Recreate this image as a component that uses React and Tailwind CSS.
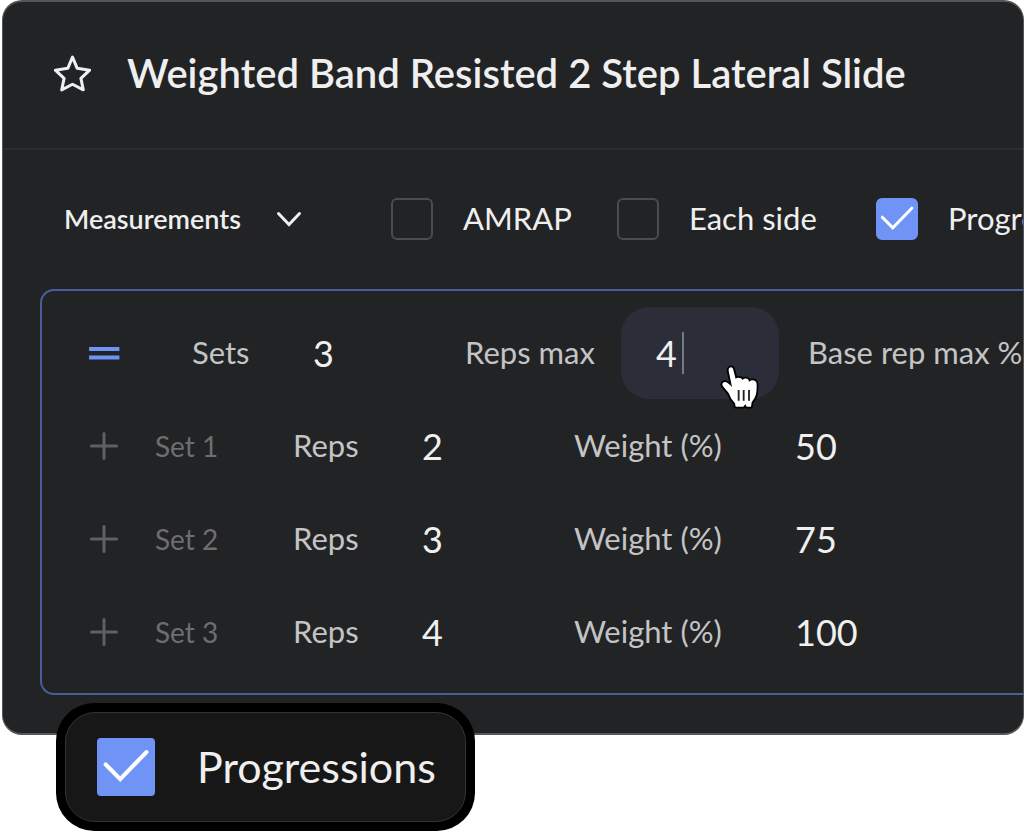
import React, { useState } from "react";

function StarIcon() {
  return (
    <svg className="h-[37px] w-[37px]" viewBox="161 166 110 108" fill="none" stroke="#efefef" strokeWidth="9" strokeLinejoin="round" aria-hidden="true">
      <path d="M216 171.500 L230 204.500 L267 210 L241 234.500 L248 268.500 L216 252 L184 268.500 L191 234.500 L165 210 L202 204.500 Z" />
    </svg>
  );
}

function ChevronIcon() {
  return (
    <svg className="pointer-events-none col-start-1 row-start-1 h-4 w-[26px] justify-self-end" viewBox="0 0 26 16" fill="none" stroke="#efefef" strokeWidth="3" strokeLinecap="round" aria-hidden="true">
      <path d="M2.500 2.500 L13 13.500 L23.500 2.500" />
    </svg>
  );
}

function PlusIcon() {
  return (
    <svg className="h-[30px] w-[30px]" viewBox="0 0 30 30" stroke="#5f6061" strokeWidth="3" strokeLinecap="round" aria-hidden="true">
      <path d="M15 2.500 V27.500 M2.500 15 H27.500" />
    </svg>
  );
}

function DragIcon() {
  return (
    <svg className="h-4 w-8" viewBox="0 0 32 16" stroke="#6f94f5" strokeWidth="3.800" strokeLinecap="square" aria-hidden="true">
      <path d="M3 4 H29.500 M3 12.500 H29.500" />
    </svg>
  );
}

function HandCursor() {
  return (
    <svg className="pointer-events-none absolute right-[20px] bottom-[-10px] h-[44px] w-[39px]" viewBox="60 48 117 132" aria-hidden="true">
      <path
        d="M93 55 C97 55 99 58 100 62 L107 90 C109 86 118 85 122 88 C125 89 127 91 127 94 C130 88 141 87 144 91 C146 93 147 96 147 99 C151 92 162 93 165 96 C170 99 170 104 170 110 C170 125 169 137 164 146 L155 160 L153 173 L140 173 L136 166 L130 173 L107 173 L105 163 L94 149 L86 132 L69 112 C65 106 67 101 73 99 C79 98 85 103 91 109 L96 114 L86 66 C85 60 88 55 93 55 Z"
        fill="#fff"
        stroke="#000"
        strokeWidth="11"
        strokeLinejoin="round"
        paintOrder="stroke"
      />
      <path d="M116 123 V155 M131 123 V155 M147 123 V155" stroke="#222" strokeWidth="5.500" />
    </svg>
  );
}

function Checkbox({ id, defaultChecked = false, large = false }) {
  const [checked, setChecked] = useState(defaultChecked);
  const size = large ? "h-[58px] w-[58px]" : "h-[42px] w-[42px]";
  const corner = large ? "rounded" : "rounded-md";
  return (
    <span className="grid shrink-0">
      <input
        id={id}
        type="checkbox"
        checked={checked}
        onChange={(e) => setChecked(e.target.checked)}
        className={`${size} ${corner} col-start-1 row-start-1 appearance-none border-2 border-[#4b4c4d] checked:border-[#7094f5] checked:bg-[#7094f5]`}
      />
      {checked && (
        <svg className={`${size} pointer-events-none col-start-1 row-start-1`} viewBox="0 0 42 42" fill="none" stroke="#fff" strokeWidth="3" strokeLinecap="round" aria-hidden="true">
          <path d="M6.300 19.200 L16.800 29.800 L35.800 10.200" />
        </svg>
      )}
    </span>
  );
}

const labelText = "pb-0.5 text-[31px] leading-9 whitespace-nowrap";
const valueText = "min-w-0 bg-transparent text-4xl text-[#f0f0f0] outline-none";

const sets = [
  { name: "Set 1", reps: "2", weight: "50" },
  { name: "Set 2", reps: "3", weight: "75" },
  { name: "Set 3", reps: "4", weight: "100" },
];

function SetRow({ index, name, reps, weight }) {
  return (
    <div className="grid h-[93px] grid-cols-[66px_138px_129px_152px_221px_1fr] items-center pl-[47px]">
      <button type="button" aria-label={`Add after ${name}`} className="w-[30px]">
        <PlusIcon />
      </button>
      <span className="text-[28px] leading-9 whitespace-nowrap text-[#6d6e6f]">{name}</span>
      <label htmlFor={`reps-${index}`} className={`${labelText} text-[#c4c4c5]`}>Reps</label>
      <input id={`reps-${index}`} defaultValue={reps} className={`${valueText} w-20`} />
      <label htmlFor={`weight-${index}`} className={`${labelText} text-[#c4c4c5]`}>Weight (%)</label>
      <input id={`weight-${index}`} defaultValue={weight} className={`${valueText} w-28`} />
    </div>
  );
}

export default function App() {
  return (
    <main className="font-['Lato',sans-serif]">
      <section className="ml-0.5 overflow-hidden rounded-[20px] border-x border-y-2 border-[#555657] bg-[#222325] text-[#efefef]">
        <header className="flex h-[148px] items-center gap-9 border-b-2 border-[#2d2e30] pb-1 pl-[51px]">
          <button type="button" aria-label="Add to favourites">
            <StarIcon />
          </button>
          <h1 className="text-[40px] leading-[48px] font-semibold whitespace-nowrap">Weighted Band Resisted 2 Step Lateral Slide</h1>
        </header>

        <div className="flex h-[139px] items-center pb-0.5 pl-[61px]">
          <div className="mr-[89px] grid w-[238px] shrink-0 items-center">
            <select aria-label="Measurement type" className="col-start-1 row-start-1 appearance-none bg-transparent text-[27px] leading-9 font-semibold">
              <option>Measurements</option>
            </select>
            <ChevronIcon />
          </div>
          <div className="flex w-[226px] shrink-0 items-center gap-[30px]">
            <Checkbox id="amrap" />
            <label htmlFor="amrap" className={labelText}>AMRAP</label>
          </div>
          <div className="flex w-[259px] shrink-0 items-center gap-[30px]">
            <Checkbox id="each-side" />
            <label htmlFor="each-side" className={labelText}>Each side</label>
          </div>
          <div className="flex shrink-0 items-center gap-[30px]">
            <Checkbox id="progressions" defaultChecked />
            <label htmlFor="progressions" className={labelText}>Progressions</label>
          </div>
        </div>

        <div className="mb-[38px] ml-[37px] rounded-l-[14px] border-2 border-r-0 border-[#4a5c9a] pt-4 pb-[15px]">
          <div className="grid h-[92px] grid-cols-[104px_121px_152px_156px_187px_1fr] items-center pl-[46px] text-[#c4c4c5]">
            <button type="button" aria-label="Reorder" className="w-8">
              <DragIcon />
            </button>
            <label htmlFor="sets" className={labelText}>Sets</label>
            <input id="sets" defaultValue="3" className={`${valueText} w-20`} />
            <label htmlFor="reps-max" className={labelText}>Reps max</label>
            <div className="relative flex h-[92px] w-[158px] items-center rounded-[28px] bg-[#2b2e39] pl-[35px]">
              <input id="reps-max" defaultValue="4" className={`${valueText} w-[26px]`} />
              <span className="h-[42px] w-0.5 bg-[#77797f]" />
              <HandCursor />
            </div>
            <span className={labelText}>Base rep max %</span>
          </div>
          {sets.map((set, i) => (
            <SetRow key={set.name} index={i + 1} {...set} />
          ))}
        </div>
      </section>

      <div className="relative z-10 -mt-8 ml-14 flex w-fit rounded-[38px] bg-black p-[9px]">
        <div className="flex h-[110px] w-[401px] items-center gap-[42px] rounded-[30px] border border-[#343434] bg-[#171717] pl-[31px] text-[#efefef]">
          <Checkbox id="progressions-callout" defaultChecked large />
          <label htmlFor="progressions-callout" className="text-[43px] leading-[52px] whitespace-nowrap">Progressions</label>
        </div>
      </div>
    </main>
  );
}
